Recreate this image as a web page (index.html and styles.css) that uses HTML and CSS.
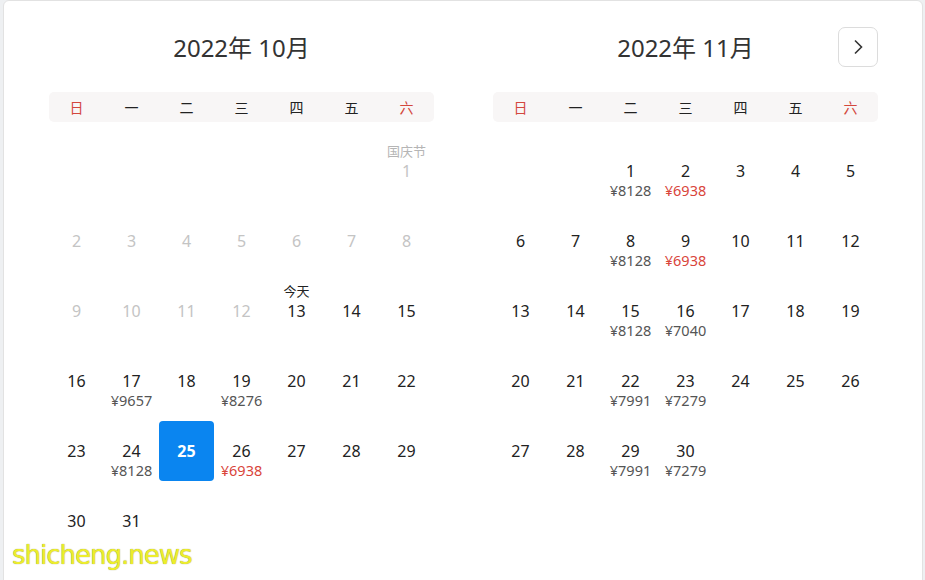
FILE: index.html
```html
<!DOCTYPE html>
<html lang="zh-CN">
<head>
  <meta charset="UTF-8">
  <meta name="viewport" content="width=device-width, initial-scale=1.0">
  <title>选择日期</title>
  <link rel="stylesheet" href="styles.css">
</head>
<body>
  <div class="picker">
    <div class="month">
      <div class="month-head">
        <h2 class="month-title">2022年 10月</h2>
      </div>
      <div class="weekdays">
        <span class="weekend">日</span><span>一</span><span>二</span><span>三</span><span>四</span><span>五</span><span class="weekend">六</span>
      </div>
      <div class="days" id="oct"></div>
    </div>

    <div class="month">
      <div class="month-head">
        <h2 class="month-title">2022年 11月</h2>
        <button class="next" aria-label="下个月">
          <svg width="14" height="16" viewBox="0 0 14 16"><path d="M4 1.5 L10.5 8 L4 14.5" fill="none" stroke="#333" stroke-width="1.6"/></svg>
        </button>
      </div>
      <div class="weekdays">
        <span class="weekend">日</span><span>一</span><span>二</span><span>三</span><span>四</span><span>五</span><span class="weekend">六</span>
      </div>
      <div class="days" id="nov"></div>
    </div>
  </div>

  <div class="watermark">shicheng.news</div>

  <script>
    // prices: day -> [text, cheaper?]
    const october = {
      offset: 6, total: 31, today: 13, selected: 25,
      labels: { 1: "国庆节", 13: "今天" },
      prices: { 17: ["¥9657"], 19: ["¥8276"], 24: ["¥8128"], 26: ["¥6938", true] }
    };
    const november = {
      offset: 2, total: 30, today: 0, selected: 0,
      labels: {},
      prices: {
        1: ["¥8128"], 2: ["¥6938", true], 8: ["¥8128"], 9: ["¥6938", true],
        15: ["¥8128"], 16: ["¥7040"], 22: ["¥7991"], 23: ["¥7279"],
        29: ["¥7991"], 30: ["¥7279"]
      }
    };

    function renderMonth(el, m) {
      for (let i = 0; i < m.offset; i++) {
        el.appendChild(document.createElement("div"));
      }
      for (let d = 1; d <= m.total; d++) {
        const cell = document.createElement("div");
        cell.className = "day";
        if (m.today && d < m.today) cell.classList.add("past");
        if (d === m.selected) cell.classList.add("selected");

        const label = document.createElement("span");
        label.className = "label";
        if (m.labels[d]) {
          label.textContent = m.labels[d];
          if (d === m.today) label.classList.add("today");
        }

        const num = document.createElement("span");
        num.className = "num";
        num.textContent = d;

        const price = document.createElement("span");
        price.className = "price";
        if (m.prices[d]) {
          price.textContent = m.prices[d][0];
          if (m.prices[d][1]) price.classList.add("low");
        }

        cell.append(label, num, price);
        el.appendChild(cell);
      }
    }

    renderMonth(document.getElementById("oct"), october);
    renderMonth(document.getElementById("nov"), november);
  </script>
</body>
</html>
```

FILE: styles.css
```css
body {
  margin: 0;
  background: #eef0f2;
  font-family: "Noto Sans", "Noto Sans CJK SC", sans-serif;
  color: #222;
  height: 580px;
  overflow: hidden;
}

.picker {
  display: flex;
  gap: 59px;
  margin: 0 2px 0 3px;
  padding: 0 44px 0 45px;
  height: 590px;
  background: #fff;
  border: 1px solid #e2e2e2;
  border-radius: 6px;
}

.month {
  width: 386px;
}

.month-head {
  position: relative;
  height: 91px;
}

.month-title {
  margin: 0;
  padding-top: 27px;
  font-size: 24px;
  font-weight: normal;
  line-height: 40px;
  text-align: center;
  color: #333;
}

.next {
  position: absolute;
  top: 26px;
  right: 0;
  width: 40px;
  height: 40px;
  display: flex;
  align-items: center;
  justify-content: center;
  padding: 0;
  background: #fff;
  border: 1px solid #dcdcdc;
  border-radius: 7px;
}

.weekdays {
  display: grid;
  grid-template-columns: repeat(7, 1fr);
  height: 30px;
  align-items: center;
  background: #f8f6f6;
  border-radius: 5px;
  font-size: 14px;
  text-align: center;
  color: #222;
}

.weekdays .weekend {
  color: #d3473d;
}

.days {
  display: grid;
  grid-template-columns: repeat(7, 55px);
  grid-auto-rows: 60px;
  row-gap: 10px;
  margin-top: 19px;
}

.day {
  display: grid;
  grid-template-rows: 20px 20px 20px;
  justify-items: center;
  align-items: center;
  border-radius: 4px;
}

.num {
  font-size: 16px;
  line-height: 20px;
}

.label {
  font-size: 13px;
  line-height: 20px;
  color: #b5b5b5;
}

.label.today {
  color: #222;
}

.price {
  font-size: 14.5px;
  line-height: 18px;
  align-self: start;
  color: #555;
}

.price.low {
  color: #d9453b;
}

.day.past .num {
  color: #c4c4c4;
}

.day.selected {
  background: #0a85f0;
}

.day.selected .num {
  color: #fff;
  font-weight: bold;
}

.watermark {
  position: absolute;
  left: 12px;
  top: 540px;
  font-family: "DejaVu Sans", sans-serif;
  font-size: 26px;
  letter-spacing: -1px;
  color: #eded2c;
  text-shadow: 0 0 1px #8a8a20;
}
```
